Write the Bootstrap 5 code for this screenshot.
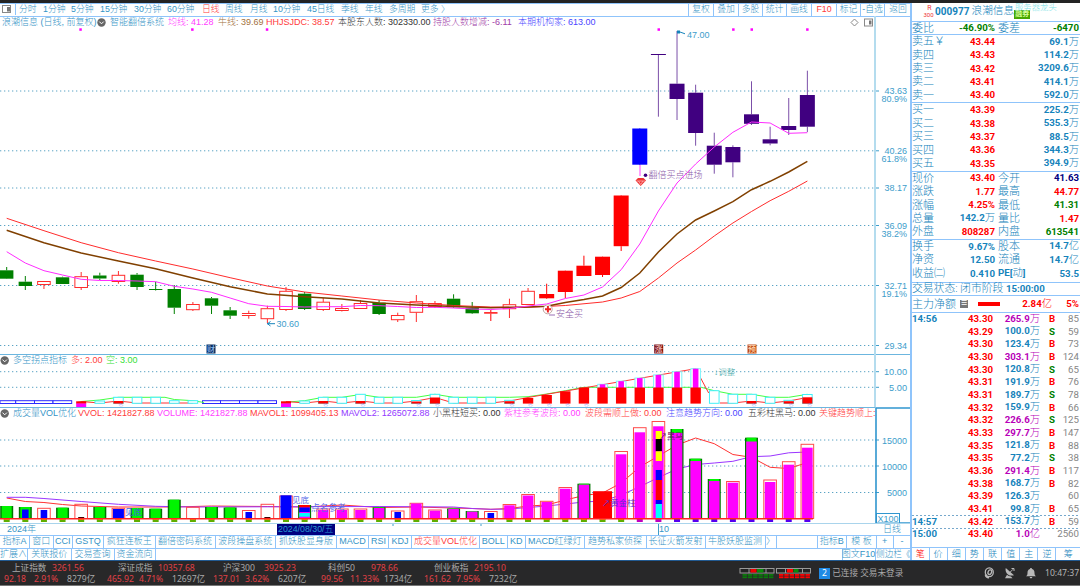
<!DOCTYPE html>
<html lang="zh-CN">
<head>
    <meta charset="UTF-8">
    <title>浪潮信息 000977</title>
    <link rel="stylesheet" href="https://cdn.jsdelivr.net/npm/bootstrap@5.3.0/dist/css/bootstrap.min.css">
    <style>
        :root { --line: #8fc4fb; --blue: #3594c6; --deep: #1583bb; }
        body { font: 300 9px/1 "Liberation Sans", "Noto Sans CJK SC", sans-serif; color: var(--blue); background: #fff; height: 586px; overflow: hidden; }
        .screen { width: 1080px; height: 586px; white-space: nowrap; }
        .edge-top { height: 3px; background: #232323; }
        .left-pane { width: 911px; }
        .strip { display: grid; align-items: center; flex: none; }
        .bar-top { height: 13.5px; font-size: 8.8px; border: solid var(--line); border-width: 1px 0; grid-template-columns: 19px 24px 28px 29px 34px 33px 35px 23px 25px 23px 34px 34px 24px 24px 32px 267px repeat(2, 25px) repeat(2, 24px) 25px 25px repeat(2, 24px) 27px; }
        .bar-top .cell { border-left: 1px solid var(--line); }
        .cell { height: 100%; display: flex; align-items: center; justify-content: center; }
        .legend-main { height: 12.5px; padding-left: 2px; grid-template-columns: 95px 13px 58px 50px 48px 72px 95px 85px 332px 14px 20px; }
        .legend-turn { height: 12px; grid-template-columns: 13px 58px 35px 60px; }
        .legend-vol { height: 12px; width: 875px; overflow: hidden; grid-template-columns: 13px 65px 79px 93px 91px 92px 71px 81px 81px 82px 71px 56px; }
        .chart { display: block; overflow: visible; flex: none; }
        .panel-line { border-top: 1px solid #6cb6df; }
        .dates { height: 12px; border-top: 1px solid #a9d4ec; grid-template-columns: 7px 270px 58px 324px 224px 28px; }
        .dates .picked { background: #000080; color: #2a9ad0; height: 11px; padding: 1px 0 0 1px; font-size: 8.8px; }
        .tabs-a, .tabs-b, .tabs-c { border-top: 1px solid var(--line); font-size: 9px; }
        .tabs-a { height: 12.5px; grid-template-columns: 29px 23.5px 19.5px 31px 51.5px 60px 60.5px 61px 32px 20px 23px 68px 27.5px 18.5px 58.5px 62px 59px 60px 11px 41px 29.5px 30px 16.5px 18px; }
        .tabs-b { height: 12.5px; grid-template-columns: 27px 43.5px 43px 41px 687px 33px 36.5px; }
        .tabs-c { height: 12.5px; grid-template-columns: 16.5px repeat(7, 18.15px) 1fr; }
        .tabs-a .cell + .cell, .tabs-b .cell + .cell, .tabs-c .cell + .cell { border-left: 1px solid var(--line); }
        .tabs-b .cell:last-child { font-size: 8.6px; }
        /* quote column */
        .quote { border-left: 2px solid var(--line); margin-left: -1px; font: 300 11px/1 Roboto, "Noto Sans CJK SC", sans-serif; color: #1583bb; }
        .quote-wrap { width: 169px; }
        .quote b { font-size: 9.7px; font-weight: 700; color: var(--deep); text-align: right; }
        .quote b i { font-style: normal; font-weight: 300; font-size: 10.3px; }
        .q-head { height: 17.5px; padding-left: 12px; }
        .q-head b { font-size: 10px; }
        .q-flag { width: 11px; font-size: 7px; line-height: 6.5px; color: #e33; text-align: center; font-weight: 400; }
        .q-flag small { font-size: 6px; display: block; margin-left: -2px; }
        .q-name { font-size: 10.7px; color: var(--deep); margin-left: 2px; }
        .q-tag { background: #47a700; color: #d8ff9a; font-size: 7px; line-height: 9px; width: 16px; height: 9px; text-align: center; margin-top: 6px; font-weight: 700; }
        .q-sector { left: 103px; top: 0; font-size: 8.4px; color: #7ddfe6; }
        .q-sec { border-top: 1.5px solid var(--line); display: grid; align-items: center; padding-right: 1px; flex: none; }
        .q-book { grid-template-columns: 40px 43px 1fr; grid-auto-rows: 13.4px; }
        .q-info { grid-template-columns: 22px 61px 3px 30px 1fr; grid-auto-rows: 13.4px; }
        .h-one { height: 13.5px; } .h-five { height: 68.3px; } .h-three { height: 43px; }
        .q-state { height: 13.5px; display: flex; font-size: 10.8px; }
        .q-state b, .q-main b { font-size: 9.7px; }
        .q-main { height: 16.5px; grid-template-columns: 44px 22px 22px 52px 1fr; }
        .q-note { width: 8px; height: 8px; background: #777; color: #fff; font-size: 7px; line-height: 7px; }
        .q-bar { height: 4.5px; background: red; }
        .tick { display: grid; grid-template-columns: 31px 50px 47px 24px minmax(0, 1fr); align-items: center; height: 12.67px; }
        .tick .cnt { font-size: 9.7px; font-weight: 400; color: #858585; justify-self: end; }
        .tick .side { text-align: center; }
        .tick.dotted { background: repeating-linear-gradient(90deg, #76a8cc 0 2px, transparent 2px 4px) top / 100% 1px no-repeat; }
        .quote .r, .quote .r i { color: #f00; } .quote .g { color: #008000; } .quote .n { color: #000080; } .quote .p { color: #b800b8; }
        .q-ticks { height: 235.5px; display: block; }
        .q-ticks .tick:first-child { margin-top: -.3px; }
        .cr { color: #ff3b3b; } .cm { color: #ff40ff; } .cb { color: #a2703c; } .ck { color: #333; } .cp { color: #a03ca8; } .cv { color: #4a46ff; } .cg { color: #35e035; } .cl { color: #9338ff; } .cred { color: red; }
        /* status bar */
        .status { height: 26px; background: #282829; border-top: 1px solid #225a91; border-bottom: 1px solid #777; font: 8.6px/1 "Noto Sans", "Noto Sans CJK SC", sans-serif; color: #a9a9a9; }
        .idx { display: grid; height: 24px; padding-top: 2px; grid-template-rows: 10.5px 11px; }
        .idx div { display: grid; align-items: center; }
        .idx .up { color: #e04046; }
        .idx .row-a { grid-template-columns: 12px 40px 66px 40px 65px 41px 64px 43px 63px 40px 42px; }
        .idx .row-b { grid-template-columns: 4px 30px 33px 40px 32px 33px 41px 32px 33px 43px 29px 34px 40px 32px 33px 30px; }
        .num-badge { width: 11px; height: 11px; background: #1f8ae6; color: #fff; }
        .conn { width: 153px; }
        .tray svg { margin-right: 2px; }
        .clock { width: 35px; color: #b5b5b5; }
    </style>
</head>
<body>
<div class="screen d-flex flex-column">
    <div class="edge-top flex-shrink-0"></div>
    <div class="d-flex flex-shrink-0">
        <div class="left-pane d-flex flex-column">
            <div class="strip bar-top">
                <span class="cell border-0"><svg width="19" height="11"><rect x="2.5" y="1.5" width="8" height="7" fill="none" stroke="#888"/><rect x="7" y="3" width="3" height="4.5" fill="#777"/><path d="M15.5 -1V12" stroke="#8fc4fb"/></svg></span>
                <span>分时</span><span>1分钟</span><span>5分钟</span><span>15分钟</span><span>30分钟</span><span>60分钟</span><span class="cr">日线</span><span>周线</span><span>月线</span><span>10分钟</span><span>45日线</span><span>季线</span><span>年线</span><span>多周期</span><span>更多 〉</span>
                <span class="cell">复权</span><span class="cell">叠加</span><span class="cell">多股</span><span class="cell">统计</span><span class="cell">画线</span><span class="cell cr">F10</span><span class="cell">标记</span><span class="cell">-自选</span><span class="cell">返回</span>
            </div>

            <div class="strip legend-main">
                <span>浪潮信息 (日线, 前复权)</span>
                <svg width="9" height="9"><circle cx="4.5" cy="4.5" r="4.2" fill="#666"/><path d="M2.3 3.6 4.5 5.8 6.7 3.6" fill="none" stroke="#fff"/></svg>
                <span>智能翻倍系统</span><span class="cm">均线: 41.28</span><span class="cb">牛线: 39.69</span><span class="cr">HHJSJDC: 38.57</span><span class="ck">本股东人数: 302330.00</span><span class="cp">持股人数增减: -6.11</span><span class="cv">本期机构家: 613.00</span>
                <svg width="9" height="9"><path d="M4.5 1 8 4.5 4.5 8 1 4.5Z" fill="none" stroke="#888"/></svg>
                <svg width="10" height="9"><rect x=".5" y="1" width="8" height="7" fill="none" stroke="#888"/><rect x="5" y="2.5" width="2.5" height="4" fill="#777"/></svg>
            </div>
            <svg class="chart" id="price" width="911" height="325" viewBox="0 29 911 325"></svg>

            <div class="strip legend-turn panel-line">
                <svg width="10" height="9"><circle cx="4.7" cy="4.5" r="4.2" fill="#666"/><path d="M2.5 3.6 4.7 5.8 6.9 3.6" fill="none" stroke="#fff"/></svg>
                <span>多空拐点指标</span><span class="cr">多: 2.00</span><span class="cg">空: 3.00</span>
            </div>
            <svg class="chart" id="turn" width="911" height="41" viewBox="0 366 911 41"></svg>

            <div class="strip legend-vol panel-line">
                <svg width="10" height="9"><circle cx="4.7" cy="4.5" r="4.2" fill="#666"/><path d="M2.5 3.6 4.7 5.8 6.9 3.6" fill="none" stroke="#fff"/></svg>
                <span>成交量VOL优化</span><span class="cr">VVOL: 1421827.88</span><span class="cm">VOLUME: 1421827.88</span><span class="cr">MAVOL1: 1099405.13</span><span class="cl">MAVOL2: 1265072.88</span><span class="ck">小黑柱短买: 0.00</span><span class="cm">紫柱参考波段: 0.00</span><span class="cr">波段需顺上做: 0.00</span><span class="cv">注意趋势方向: 0.00</span><span class="ck">五彩柱黑马: 0.00</span><span class="cr">关键趋势顺上:</span>
            </div>
            <svg class="chart" id="volume" width="911" height="104" viewBox="0 419 911 104"></svg>

            <div class="strip dates">
                <span></span><span>2024年</span><span class="picked">2024/08/30/五</span><span></span><span>10</span><span>日线</span>
            </div>
            <div class="strip tabs-a">
                <span class="cell">指标A</span><span class="cell">窗口</span><span class="cell">CCI</span><span class="cell">GSTQ</span><span class="cell">疯狂连板王</span><span class="cell">翻倍密码系统</span><span class="cell">波段操盘系统</span><span class="cell">抓妖股显身版</span><span class="cell">MACD</span><span class="cell">RSI</span><span class="cell">KDJ</span><span class="cell cr">成交量VOL优化</span><span class="cell">BOLL</span><span class="cell">KD</span><span class="cell">MACD红绿灯</span><span class="cell">趋势私家侦探</span><span class="cell">长征火箭发射</span><span class="cell">牛股妖股监测</span><span class="cell">〉</span><span class="cell"></span><span class="cell">指标B</span><span class="cell">模 板</span><span class="cell">+</span><span class="cell">-</span>
            </div>
            <div class="strip tabs-b">
                <span class="cell">扩展∧</span><span class="cell">关联报价</span><span class="cell">交易查询</span><span class="cell">资金流向</span><span class="cell"></span><span class="cell">图文F10</span><span class="cell">侧边栏《</span>
            </div>
        </div>

        <div class="quote-wrap">
        <div class="quote d-flex flex-column">
            <div class="q-head d-flex align-items-center position-relative">
                <span class="q-flag">R<small>300</small></span><b>000977</b><span class="q-name">浪潮信息</span><span class="q-tag">融券</span>
                <span class="q-sector position-absolute">服务器龙头</span>
            </div>
            <div class="q-sec q-info h-one"><span>委比</span><b class="g">-46.90%</b><span></span><span>委差</span><b class="g">-6470</b></div>
            <div class="q-sec q-book h-five" id="asks"></div>
            <div class="q-sec q-book h-five" id="bids"></div>
            <div class="q-sec q-info h-five">
                <span>现价</span><b class="r">43.40</b><span></span><span>今开</span><b class="n">41.63</b>
                <span>涨跌</span><b class="r">1.77</b><span></span><span>最高</span><b class="r">44.77</b>
                <span>涨幅</span><b class="r">4.25%</b><span></span><span>最低</span><b class="g">41.31</b>
                <span>总量</span><b>142.2<i>万</i></b><span></span><span>量比</span><b class="r">1.47</b>
                <span>外盘</span><b class="r">808287</b><span></span><span>内盘</span><b class="g">613541</b>
            </div>
            <div class="q-sec q-info h-three">
                <span>换手</span><b>9.67%</b><span></span><span>股本</span><b>14.7<i>亿</i></b>
                <span>净资</span><b>12.50</b><span></span><span>流通</span><b>14.7<i>亿</i></b>
                <span>收益㈡</span><b>0.410</b><span></span><b class="text-start">PE[<i>动</i>]</b><b>53.5</b>
            </div>
            <div class="q-sec q-state"><span>交易状态: 闭市阶段&nbsp;</span><b>15:00:00</b></div>
            <div class="q-sec q-main"><span>主力净额</span><span class="q-note ms-1 text-center">☰</span><span class="q-bar"></span><b class="r">2.84<i>亿</i></b><b class="r">5%</b></div>
            <div class="q-sec q-ticks" id="ticks"></div>
            <div class="strip tabs-c">
                <span class="cell cred">笔</span><span class="cell">价</span><span class="cell">细</span><span class="cell">势</span><span class="cell">联</span><span class="cell">值</span><span class="cell">主</span><span class="cell">逆</span><span class="cell">筹</span>
            </div>
        </div>
        </div>
    </div>

    <div class="status d-flex flex-shrink-0">
        <div class="idx">
            <div class="row-a"><span></span><span>上证指数</span><span class="up">3261.56</span><span>深证成指</span><span class="up">10357.68</span><span>沪深300</span><span class="up">3925.23</span><span>科创50</span><span class="up">978.66</span><span>创业板指</span><span class="up">2195.10</span></div>
            <div class="row-b"><span></span><span class="up">92.18</span><span class="up">2.91%</span><span>8279亿</span><span class="up">465.92</span><span class="up">4.71%</span><span>12697亿</span><span class="up">137.01</span><span class="up">3.62%</span><span>6207亿</span><span class="up">99.56</span><span class="up">11.33%</span><span>1734亿</span><span class="up">161.62</span><span class="up">7.95%</span><span>7232亿</span></div>
        </div>
        <div class="d-flex align-items-center ms-auto">
            <svg id="lamps" width="73" height="11" class="me-1"></svg>
            <span class="num-badge ms-1 d-flex align-items-center justify-content-center">2</span>
            <span class="conn">&nbsp;已连接 交易未登录</span>
        </div>
        <div class="tray d-flex align-items-center">
            <svg width="60" height="14" viewBox="0 0 60 14">
                <g fill="none" stroke="#b9b9b9">
                    <ellipse cx="6.3" cy="6.3" rx="4" ry="4.4" stroke-width="1.3"/>
                    <ellipse cx="6.9" cy="6.2" rx="1.7" ry="2.4" stroke-width="1.3" transform="rotate(25 7 6)"/>
                    <path d="M2.6 8.5C3 10.5 4.5 11.6 6 11.5" stroke-width="2"/>
                    <path d="M26.5 6.8 30 3.3M28.5 2.5H31V5" stroke-width="1"/>
                </g>
                <g fill="#b9b9b9">
                    <path d="M22.8 2C22 4.5 23 7 25 8.4 26.5 9.6 29 10 31 9.2ZM24 8.8 22 12.3H29.5L28 10.4C26.5 10.3 25.2 9.8 24 8.8Z"/>
                    <path d="M48 2c.7 0 1 .5 1 1 1.9.5 2.5 2 2.5 4 0 1.8.5 2.5 1.5 3.3H43c1-.8 1.5-1.5 1.5-3.3 0-2 .6-3.5 2.5-4 0-.5.3-1 1-1ZM46.7 11h2.6c0 .8-.5 1.3-1.3 1.3S46.7 11.8 46.7 11Z"/>
                </g>
            </svg>
            <span class="clock">10:47:37</span>
        </div>
    </div>
</div>

<script src="https://cdn.jsdelivr.net/npm/bootstrap@5.3.0/dist/js/bootstrap.bundle.min.js"></script>
<script>
    const cx = i => 6.7 + 18.62 * i;
    const rect = (x, y, w, h, fill, stroke) => `<rect x="${x}" y="${y}" width="${w}" height="${h}" fill="${fill}"${stroke ? ` stroke="${stroke}"` : ''}/>`;
    const seg = (x1, y1, x2, y2, c, w = 1) => `<path d="M${x1} ${y1}L${x2} ${y2}" stroke="${c}" stroke-width="${w}"/>`;
    const text = (x, y, s, c, size = 9, anchor = 'start', weight = 300) => `<text x="${x}" y="${y + size * 0.36}" fill="${c}" font-size="${size}" text-anchor="${anchor}" font-weight="${weight}">${s}</text>`;
    const poly = (pts, c, w = 1) => `<polyline points="${pts.map(p => cx(p[0]) + ',' + p[1]).join(' ')}" fill="none" stroke="${c}" stroke-width="${w}"/>`;
    const grid = y => `<path d="M0 ${y}H874" stroke="#5aa3c4" stroke-dasharray="1.3 2.7"/>` + seg(875, y, 879, y, '#3d9dcb');
    const series = a => a.map((y, i) => [i, y]);

    /* price panel: type, body top, body bottom, wick top, wick bottom */
    const candles = [
        ['g', 270.3, 278.7, 267, 279], ['g', 281.7, 286, 276, 290], ['h', 281.5, 284.5, 281, 289], ['g', 277.3, 284, 276.7, 284],
        ['h', 276.7, 287.5, 272, 290], ['g', 275.5, 278.5, 272.7, 280], ['h', 275.3, 281.5, 271, 283.7], ['g', 274.7, 287, 273, 290],
        ['g', 289, 290, 281.7, 290.5], ['g', 289, 307.7, 285, 314], ['h', 304.5, 309.7, 302, 311], ['g', 298.3, 305.7, 297, 314],
        ['g', 310.3, 315.7, 307, 319], ['h', 313.5, 315.5, 310.7, 318.7], ['h', 308.7, 318.7, 305.7, 323], ['h', 291.3, 309.5, 287, 311],
        ['g', 293.7, 309, 292, 310], ['h', 302.2, 309.5, 298, 311], ['h', 308.5, 310.5, 304, 311.5], ['h', 303.5, 308.5, 300, 309],
        ['g', 302.7, 314, 300, 315], ['h', 315.5, 319.7, 312.7, 322], ['h', 301.7, 312.3, 295, 322], ['h', 303.5, 306.5, 301, 308],
        ['g', 298.7, 307.3, 294.3, 308], ['g', 307.7, 313.3, 302, 314], ['r', 312.2, 313.6, 310, 321], ['h', 304.7, 308.7, 298.7, 318],
        ['h', 291.3, 304.5, 288, 305], ['r', 294, 298.3, 283.7, 299], ['r', 270.7, 292, 271, 298], ['r', 265.7, 276, 255.7, 276],
        ['r', 256.7, 275, 257, 277], ['r', 195.5, 246.2, 196, 251], ['b', 128.5, 164.7, 129, 164], ['p', 54, 55, 54, 116.7],
        ['p', 83.7, 99, 31, 120], ['p', 92.7, 133, 84.7, 145.7], ['p', 145.7, 164.7, 132.7, 173.7], ['p', 147, 162.3, 145.3, 177.3],
        ['p', 114.3, 123.8, 81.3, 125], ['p', 139.3, 143.5, 126.7, 145.3], ['p', 126, 130, 98, 135], ['p', 95, 126.7, 70.7, 132]
    ];
    const shade = { g: '#008000', h: '#ff2c2c', r: '#ff0000', b: '#0000ff', p: '#400080' };
    let s = [91, 150.8, 188, 225.5, 285.5, 345.5].map(grid).join('');
    s += seg(875, 16, 875, 354, '#b4dcee', 2);
    [['43.63', 90.8], ['80.9%', 99], ['40.26', 151], ['61.8%', 159], ['38.17', 188], ['36.09', 225.5], ['38.2%', 233.5], ['32.71', 285.3], ['19.1%', 293.5], ['29.34', 345.7]]
        .forEach(l => s += text(907, l[1], l[0], '#3d9dcb', 9, 'end'));
    candles.forEach(([t, a, b, hi, lo], i) => {
        const x = cx(i), c = shade[t], hw = i > 28 ? 7.5 : 6.7, wick = t === 'p' ? '#7b4fa8' : c;
        s += seg(x, hi, x, a, wick) + seg(x, b, x, lo, wick);
        s += t === 'h' ? rect(x - 6.3, a, 12.6, b - a, '#fff', c) : rect(x - hw, a, hw * 2, b - a, c);
    });
    s += poly([[0, 218.3], [2, 230.7], [4, 242.7], [6, 252.7], [8, 261], [10, 269], [12, 277.7], [14, 286], [16, 292], [18, 296], [20, 300], [22, 303], [24, 305.5], [26, 307], [28, 307.3], [30, 305.5], [32, 302], [33, 298], [34, 291.5], [35, 278], [36, 263], [37, 250], [38, 236], [39, 223], [40, 211.5], [41, 200.7], [42, 191.3], [43, 181]], '#ff2c2c');
    s += poly([[0, 230.3], [2, 242.7], [4, 253], [6, 261], [8, 268.7], [10, 278], [12, 286.7], [14, 294], [16, 296.7], [18, 299], [20, 303], [22, 305], [24, 306.5], [26, 307.7], [28, 307], [29, 306.3], [30, 302.5], [31, 299.5], [32, 296], [33, 287.5], [34, 273], [35, 252], [36, 234], [37, 220], [38, 211], [39, 201.7], [40, 189.7], [41, 181.3], [42, 172], [43, 161.3]], '#804000', 1.5);
    s += poly(series([251.7, 263, 270.7, 275, 279.3, 280.5, 280.5, 281, 281.7, 286.3, 289, 292.3, 298, 303.7, 306.3, 306.5, 307, 306.7, 306.7, 305.5, 305.7, 306.5, 307.5, 307.3, 308, 309, 309.5, 308.5, 306, 304, 298.5, 295, 287, 269.7, 244, 211, 183, 164, 147, 132.3, 122, 123, 133.3, 132.7]), '#ff2cff');
    [80.5, 192.3, 267, 658.7, 733.3, 751.7, 807.3].forEach(x => s += rect(x - 1.2, 28.3, 2.5, 2.5, '#f0f'));
    s += text(687, 34.3, '47.00', '#3d9dcb') + seg(678, 31.3, 685, 33.8, '#1583bb') + rect(677, 30.5, 3, 3, '#1583bb');
    s += text(276.5, 324, '30.60', '#3d9dcb') + `<path d="M267 323.7H275M270.5 321.5 267.5 323.7 270.5 326" stroke="#1583bb" fill="none"/>`;
    s += seg(640, 165, 640, 176, '#ff40ff') + `<circle cx="645.5" cy="175.3" r="1.8" fill="#400080"/>` + text(648.5, 175, '翻倍买点进场', '#8a5aa8', 9);
    s += `<path d="M635.5 180.5 638 178H643.5L646 180.5 640.7 186Z" fill="#e33"/><path d="M636.5 181H645M638.5 181 640.7 184.5 643 181" stroke="#ffc4c4" stroke-width=".7" fill="none"/>`;
    s += `<circle cx="547.7" cy="309.3" r="4.5" fill="#fff" stroke="#c0a4a0"/><path d="M545 309.3H551M547.9 306V312.5" stroke="#e22" stroke-width="2"/>` + seg(549, 315, 555, 315, '#9a6fb5') + text(556, 314, '安全买', '#8a5aa8', 9);
    [[211, '财', '#0b2e5e', '#8ab8ec'], [658.7, '涨', '#7c1010', '#f0c0c0'], [752, '预', '#c04c18', '#ffd8b0']].forEach(m =>
        s += rect(m[0] - 4.5, 344.5, 9, 9, m[2]) + text(m[0], 349, m[1], m[3], 8, 'middle', 500));
    document.getElementById('price').innerHTML = s;

    /* turning point panel: [index, top of box, top of red part] */
    s = [371.7, 387.3].map(grid).join('') + seg(875, 354, 875, 407, '#b4dcee', 2);
    s += text(907, 372, '10.00', '#3d9dcb', 9.2, 'end') + text(907, 387.5, '5.00', '#3d9dcb', 9.2, 'end');
    [[0, 15.7], [15.7, 34.5], [34.5, 53], [53, 71.7], [202.5, 220.5], [220.5, 239.5], [239.5, 258], [258, 276.5]].forEach(b => s += rect(b[0], 400.7, b[1] - b[0], 2.8, '#fff', '#2b2bff'));
    const turns = [[5, 401], [6, 397.3, 401], [7, 397.3], [8, 397.3], [9, 400.7], [10, 400.7], [16, 401], [17, 397.3, 401], [18, 397.3], [19, 394.3, 401], [20, 397.3], [21, 397.3], [22, 400.5, 401.5], [23, 394.3, 397.5], [24, 397.3], [25, 397.3], [26, 397.3], [27, 400.3, 401.2], [38, 390.7], [39, 394.3], [40, 394.3, 401], [41, 397.3], [42, 400.3, 401.2], [43, 394.5, 397.3]];
    s += poly([[3.8, 402.5], [4, 401.5], [5, 400], [6, 397.3], [8.5, 397.3], [9, 399.5], [10, 400.7], [10.6, 402.5]], '#4f4');
    s += poly([[14.8, 402.5], [16, 400.7], [17, 397.3], [18, 397.3], [19, 394.5], [20, 397.3], [22, 397.3], [23, 394.3], [24, 397.3], [27, 397.3], [28, 396.7], [29, 394], [30, 390.7], [31, 387.3], [37.3, 387.3], [38, 390.7], [39, 394.3], [40, 394.3], [41, 397.3], [42, 397.3], [43, 394.3]], '#4f4');
    s += poly([[4, 401.5], [5, 403], [6, 401], [7, 403], [10, 403]], '#f33') + poly([[15, 401.5], [16, 403], [17, 401], [18, 403], [19, 401], [20, 403], [21, 403], [22, 401], [23, 397.5], [24, 403], [26, 403], [27, 401], [28, 397.5], [37, 368.7], [37.7, 393]], '#f33') + poly([[38.3, 403], [39, 403], [40, 401], [41, 403], [42, 401], [43, 397.5]], '#f33');
    turns.forEach(([i, top, red]) => {
        s += rect(cx(i) - 4.8, top, 9.6, 403.3 - top, '#fff', '#40f0f8');
        if (red) s += rect(cx(i) - 5, red, 10, 403.6 - red, '#f00');
    });
    [4, 15].forEach(i => s += rect(cx(i) - 5, 401.3, 10, 2.5, '#f00') + rect(cx(i) - 5, 403.5, 10, 3.5, '#f0f'));
    [398, 395, 391.3, 387.5, 387.5, 387.5, 387.5, 387.5, 387.5, 387.5].forEach((y, k) => {
        const x = cx(28 + k);
        if (k > 3) {
            const top = 384.3 - 3.12 * (k - 4);
            s += rect(x - 4.8, top, 9.6, 388 - top, '#fff', '#7ff4fa') + rect(x - 2.8, top, 5.6, 388 - top, '#f0f');
        }
        s += rect(x - 5.2, y, 10.4, 403.6 - y, '#f00');
    });
    [6, 17, 19, 22, 23, 27, 28, 29, 30, 31, 40, 42, 43].forEach(i => s += text(cx(i) + 2.5, 405.5, '☆', '#6a6af0', 5, 'middle'));
    s += text(714, 371.7, '↓调整', '#3ba5a5', 8.5);
    document.getElementById('turn').innerHTML = s;

    /* volume panel: edge type, top, inner fill, inner top */
    const vols = [
        ['g', 506], ['g', 507, '#00f', 509.5], ['h', 508.3, '#00f', 510], ['g', 507.7], ['h', 504.3, '#400', 517], ['g', 507], ['h', 508.3, '#00f', 509], ['g', 508],
        ['g', 508.7], ['g', 499.7], ['h', 507.3], ['g', 507], ['g', 507.5], ['h', 510.5, '#00f', 512], ['h', 504.3, '#400', 517], ['h', 496, '#00f', 495.3],
        ['g', 505, '#f0f', 507], ['h', 509, '#f0f', 510], ['h', 509, '#f0f', 510], ['h', 509, '#f0f', 510], ['g', 507.3, '#f0f', 508], ['h', 511, '#00f', 512], ['h', 503.3, '#f0f', 503.5], ['h', 510, '#f0f', 510.7],
        ['g', 508.5, '#f0f', 509], ['g', 511, '#f0f', 511.5], ['h', 511.5, '#00f', 513], ['h', 504.5, '#f0f', 505.3], ['h', 494.5, '#f0f', 495.5], ['h', 501.3, '#f0f', 502], ['h', 487.5, '#f0f', 488.7], ['g', 483.7, '#f0f', 484.7],
        ['x', 491.2], ['h', 451.5, '#f0f', 454.3], ['h', 427.7, '#f0f', 432.3], ['h', 421.5, '#f0f', 426.3], ['g', 429, '#f0f', 433], ['g', 458.7, '#f0f', 461], ['g', 479, '#f0f', 481], ['h', 481.5, '#f0f', 482.7],
        ['g', 437.7, '#f0f', 441.5], ['h', 480, '#f0f', 482], ['h', 461.7, '#f0f', 464.7], ['h', 444.3, '#f0f', 447.7]
    ];
    s = [440, 466, 492.5].map(grid).join('');
    s += poly([[0, 498], [1, 501.5], [2, 502.5], [3, 504.5], [4, 506], [6, 507], [9, 507], [11, 506], [14, 506.5], [16, 507], [18, 505], [20, 507.5], [22, 507], [25, 508.5], [26, 509.3], [27, 508.5], [28, 506], [29, 505], [30, 500], [31, 495.5], [32, 493], [33, 483], [34, 467], [35, 456], [36, 445], [37, 438], [38, 443.7], [39, 454.5], [40, 457.3], [41, 467.3], [42, 468.5], [43, 462.5]], '#f33');
    s += poly([[0, 497.3], [1, 497.3], [2, 498.5], [4, 501.5], [6, 504.3], [8, 506.3], [10, 507], [20, 506.5], [24, 507], [25, 508.5], [26, 509.3], [27, 509], [28, 507.5], [29, 506], [30, 504], [31, 502], [32, 501], [33, 495], [34, 486.7], [35, 477.5], [36, 469], [37, 464.5], [38, 463], [39, 461.3], [40, 456.7], [41, 456], [42, 452.8], [43, 452]], '#9a35ff');
    vols.forEach(([t, top, fill, inner], i) => {
        const x = cx(i);
        if (t === 'g') s += rect(x - 6.5, top, 13, 519 - top, '#007500') + rect(x - 5, top, 10, 519 - top, '#00f400');
        if (t === 'h') s += rect(x - 6.3, top, 12.6, 518.5 - top, 'none', '#ff4a4a');
        if (t === 'x') s += rect(x - 9.5, top, 19, 519 - top, '#f00');
        if (fill) {
            const hw = fill === '#f0f' ? 5.3 : fill === '#400' ? 3 : 3.3;
            const w = i === 15 || i === 6 ? 5.5 : hw;
            s += rect(x - w, inner, w * 2, 518.5 - inner, fill);
        }
        s += rect(x - 3, 519, 6, 3, i < 34 ? '#5fae00' : i < 36 ? '#c000c0' : '#5500f0');
        if (i < 34) s += rect(x - 2.5, 519, 5, 1, '#f7a000');
    });
    s += rect(299.2, 505, 10.6, 2.5, '#f00') + rect(299.2, 507.5, 10.6, 4.5, '#00f') + rect(299.2, 513, 10.6, 3.7, '#0ff');
    [[431, 439, '#ff0'], [439, 451.3, '#000'], [451.3, 461, '#ff0'], [470, 480, '#00f'], [480, 500, '#f00'], [500, 504, '#00f'], [504, 518, '#0ff']].forEach(b => s += rect(655.7, b[0], 6.2, b[1] - b[0], b[2]));
    s += seg(0, 518.8, 813, 518.8, '#f22', 1.6);
    s += text(125, 511.5, '见底', '#3a5be0', 8.5, 'start', 400) + text(292, 499.7, '见底', '#5a6be8', 8.5, 'start', 400) + text(311, 507.5, '点名参考', '#5a6be8', 8.7, 'start', 400);
    s += text(659, 436.5, '↗黑马', '#5a1060', 8, 'start', 400) + text(602, 502.5, '↗黄金柱', '#5a2cd0', 8.4, 'start', 400);
    s += `<path d="M911 408H876V523H911" fill="none" stroke="#3096cf" stroke-width="1.6"/>` + rect(876.5, 513.5, 23, 9.5, '#fff', '#3096cf');
    s += text(877.5, 518.5, 'X100', '#3d9dcb', 9);
    [['15000', 440.3], ['10000', 466.3], ['5000', 492.7]].forEach(l => s += text(907, l[1], l[0], '#3d9dcb', 9, 'end'));
    s += seg(393, 523, 393, 526, '#3d9dcb') + seg(481, 523, 481, 526, '#3d9dcb') + seg(658.5, 523, 658.5, 535, '#3d9dcb');
    document.getElementById('volume').innerHTML = s;

    /* order book */
    const wan = v => v.replace(/([万亿])/, '<i>$1</i>');
    const book = (id, rows) => document.getElementById(id).innerHTML = rows.map(r => `<span>${r[0]}</span><b class="r">${r[1]}</b><b>${wan(r[2])}</b>`).join('');
    book('asks', [['卖五￥', '43.44', '69.1万'], ['卖四', '43.43', '114.2万'], ['卖三', '43.42', '3209.6万'], ['卖二', '43.41', '414.1万'], ['卖一', '43.40', '592.0万']]);
    book('bids', [['买一', '43.39', '225.2万'], ['买二', '43.38', '535.3万'], ['买三', '43.37', '88.5万'], ['买四', '43.36', '344.3万'], ['买五', '43.35', '394.9万']]);

    const trades = [
        ['14:56', '43.30', '265.9万', 'B', 85, 1], ['', '43.29', '100.0万', 'S', 59], ['', '43.30', '123.4万', 'B', 73], ['', '43.30', '303.1万', 'B', 124, 1],
        ['', '43.30', '120.8万', 'S', 65], ['', '43.31', '191.9万', 'B', 76], ['', '43.31', '189.7万', 'S', 78], ['', '43.32', '159.9万', 'B', 66],
        ['', '43.32', '226.6万', 'S', 125, 1], ['', '43.33', '297.7万', 'B', 147, 1], ['', '43.35', '121.8万', 'B', 88], ['', '43.35', '77.2万', 'S', 38],
        ['', '43.36', '291.4万', 'B', 117, 1], ['', '43.38', '168.7万', 'B', 82], ['', '43.39', '126.3万', '', 60], ['', '43.41', '99.8万', 'B', 65],
        ['14:57', '43.42', '153.7万', 'B', 59], ['15:00', '43.40', '1.0亿', '', 2560, 1]
    ];
    document.getElementById('ticks').innerHTML = trades.map((t, i) =>
        `<div class="tick${i > 15 ? ' dotted' : ''}"><b class="text-start">${t[0]}</b><b class="r">${t[1]}</b><b class="${t[5] ? 'p' : ''}">${wan(t[2])}</b><b class="side ${t[3] === 'B' ? 'r' : 'g'}">${t[3]}</b><span class="cnt">${t[4]}</span></div>`).join('');

    /* market breadth lamps */
    s = '';
    [[2, '#e00', '#0a8a0a'], [38.5, '#f00', '#0a8a0a']].forEach(([x, a, b], k) => {
        s += rect(x, .5, 34, 4.5, '#222', '#999') + rect(x + 10.5, 1, 6, 3.5, a) + rect(x + 17, 1, k ? 5 : 6.5, 3.5, b) + seg(x + 9, 0, x + 9, 5, '#999') + seg(x + 26, 0, x + 26, 5, '#999');
        for (let n = 0; n < 6; n++) s += rect(x + 2.5 + n * 5.3, 6, 4.4, 1.8, k ? '#f00' : '#0a7a0a') + rect(x + 2.5 + n * 5.3, 8.4, 4.4, 1.8, k ? '#f00' : '#0a7a0a');
    });
    document.getElementById('lamps').innerHTML = s;
</script>
</body>
</html>
